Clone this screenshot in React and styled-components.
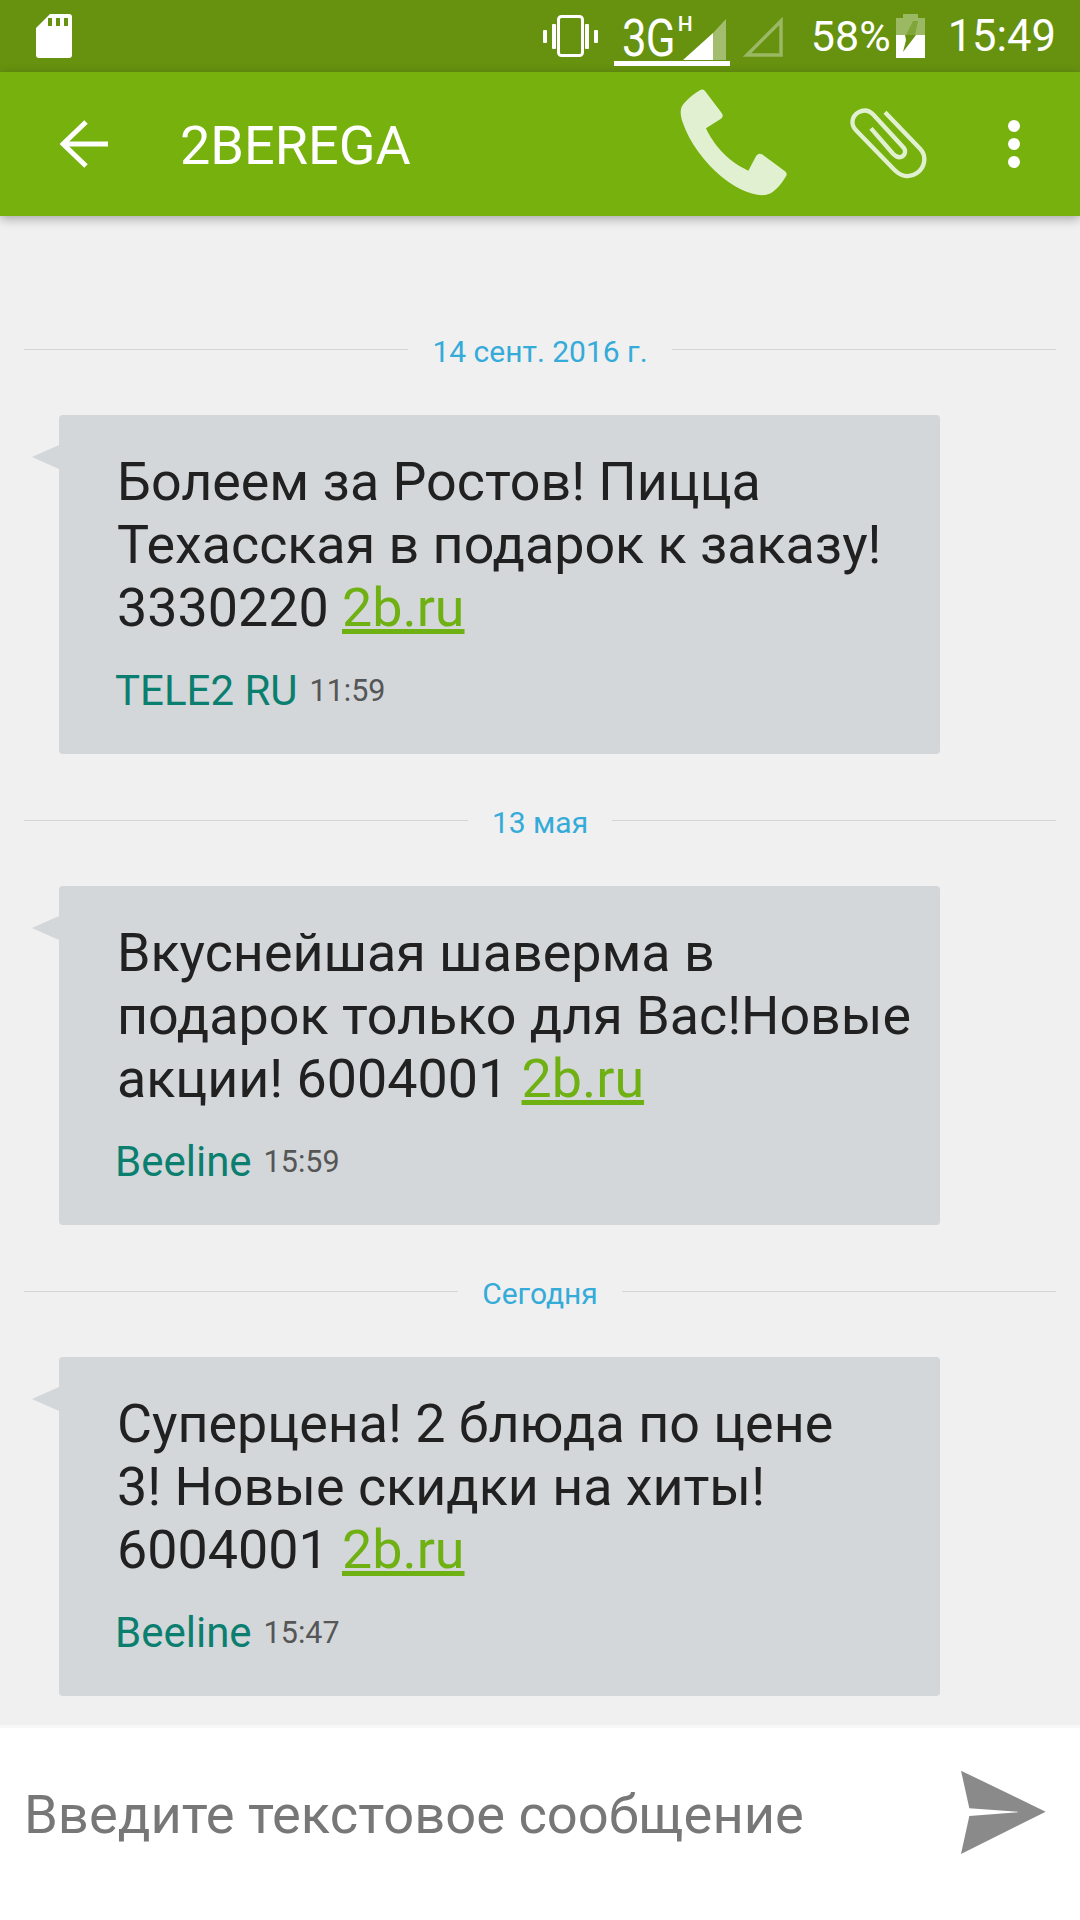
import styled, { createGlobalStyle } from "styled-components";

const messages = [
  {
    date: "14 сент. 2016 г.",
    text: "Болеем за Ростов! Пицца Техасская в подарок к заказу! 3330220",
    sender: "TELE2 RU",
    time: "11:59",
  },
  {
    date: "13 мая",
    text: "Вкуснейшая шаверма в подарок только для Вас!Новые акции! 6004001",
    sender: "Beeline",
    time: "15:59",
  },
  {
    date: "Сегодня",
    text: "Суперцена! 2 блюда по цене 3!\u00a0Новые скидки на хиты! 6004001",
    sender: "Beeline",
    time: "15:47",
  },
];

const App = () => {
  return (
    <Screen>
      <GlobalStyle />
      <StatusBar>
        <svg width="36" height="44" viewBox="0 0 36 44">
          <path
            fill="#fff"
            fillRule="evenodd"
            d="M14 0H33a3 3 0 0 1 3 3V41a3 3 0 0 1-3 3H3a3 3 0 0 1-3-3V14ZM12 4V12H16V4ZM20 4V12H24V4ZM28 4V12H32V4Z"
          />
        </svg>
        <StatusRight>
          <svg width="55" height="42" viewBox="0 0 55 42">
            <g fill="#fff">
              <rect x="0" y="15" width="4" height="13" rx="1" />
              <rect x="9" y="9" width="4" height="25" rx="1" />
              <rect x="42" y="9" width="4" height="25" rx="1" />
              <rect x="51" y="15" width="4" height="13" rx="1" />
            </g>
            <rect x="15.500" y="1.500" width="24" height="39" rx="3" fill="none" stroke="#fff" strokeWidth="3" />
          </svg>
          <Network>
            <NetworkType>3G</NetworkType>
            <NetworkSpeed>H</NetworkSpeed>
            <SignalIcon viewBox="0 0 43 41">
              <path fill="#fff" d="M0 41L30 14V41Z" />
              <path fill="#fff" opacity="0.4" d="M30 14L43 0V41H30Z" />
            </SignalIcon>
          </Network>
          <EmptySignal viewBox="0 0 41 41">
            <path fill="none" stroke="#fff" strokeWidth="3.500" opacity="0.35" d="M5 39L39 5V39Z" />
          </EmptySignal>
          <Battery>58%</Battery>
          <svg width="29" height="44" viewBox="0 0 29 44">
            <path fill="#fff" opacity="0.35" d="M7 0H22V4H29V21H0V4H7Z" />
            <path fill="#fff" d="M0 21H29V44H0Z" />
            <path fill="#66920f" d="M9 21H20L7 38L10 26Z" />
            <path fill="#66920f" opacity="0.5" d="M17 7H22L19 21H10Z" />
          </svg>
          <Clock>15:49</Clock>
        </StatusRight>
      </StatusBar>

      <AppBar>
        <svg width="48" height="48" viewBox="0 0 48 48">
          <path fill="none" stroke="#fff" strokeWidth="5" d="M48 24H3M26 2L3 24L26 46" />
        </svg>
        <Title>2BEREGA</Title>
        <PhoneIcon viewBox="0 0 390 390">
          <path
            fill="#e2f0d2"
            d="M88 33C93 30 98 31 102 36L152 102C157 109 156 115 150 119L105 148C124 190 165 245 232 275L255 232C259 224 266 222 273 226L340 275C347 280 349 286 345 292C325 325 305 345 283 348C240 352 190 325 150 292C100 250 55 190 35 130C25 100 28 85 40 72C55 55 72 42 88 33Z"
          />
        </PhoneIcon>
        <ClipIcon viewBox="0 0 300 270">
          <path
            fill="none"
            stroke="#e2f0d2"
            strokeWidth="13"
            d="M132 40L238 150C258 172 252 205 228 222C205 238 180 232 160 212L45 94C28 76 32 52 52 40C70 30 85 34 98 48L188 146C196 156 192 170 180 174C172 177 164 172 156 164L90 88"
          />
        </ClipIcon>
        <Dots>
          <Dot />
          <Dot />
          <Dot />
        </Dots>
      </AppBar>

      <Conversation>
        {messages.map((message) => (
          <Thread key={message.date}>
            <DateRow>
              <DateLine />
              <DateLabel>{message.date}</DateLabel>
              <DateLine />
            </DateRow>
            <Bubble>
              <MessageText>
                {message.text} <a href="#site">2b.ru</a>
              </MessageText>
              <Meta>
                <Sender>{message.sender}</Sender>
                <Time>{message.time}</Time>
              </Meta>
            </Bubble>
          </Thread>
        ))}
      </Conversation>

      <Composer>
        <Placeholder>Введите текстовое сообщение</Placeholder>
        <SendIcon viewBox="0 0 315 315">
          <path fill="#8a8a8a" d="M33 32L287 155L33 282L58 168L210 156L58 145Z" />
        </SendIcon>
      </Composer>
    </Screen>
  );
};

const GlobalStyle = createGlobalStyle`
  html, body {
    margin: 0;
    padding: 0;
    background: #f0f0f0;
  }
`;

const Screen = styled.div`
  width: 1080px;
  height: 1920px;
  overflow: hidden;
  display: flex;
  flex-direction: column;
  background: #f0f0f0;
  font-family: Roboto, "Noto Sans", sans-serif;
`;

const StatusBar = styled.div`
  height: 72px;
  flex: none;
  display: flex;
  align-items: center;
  justify-content: space-between;
  padding: 0 24px 0 36px;
  background: #66920f;
  box-sizing: border-box;
  color: #fff;
`;

const StatusRight = styled.div`
  display: flex;
  align-items: center;
`;

const Network = styled.div`
  display: flex;
  align-items: flex-end;
  height: 48px;
  width: 116px;
  margin: 6px 0 0 16px;
  border-bottom: 5px solid #fff;
`;

const NetworkType = styled.span`
  flex: none;
  width: 53px;
  margin-left: 8px;
  font-size: 52px;
  line-height: 44px;
  letter-spacing: -1px;
  transform: scaleX(0.84);
  transform-origin: left bottom;
`;

const NetworkSpeed = styled.span`
  flex: none;
  align-self: flex-start;
  width: 14px;
  margin: 2px 0 0 3px;
  font-size: 21px;
  font-weight: 500;
  line-height: 18px;
`;

const SignalIcon = styled.svg`
  flex: none;
  width: 43px;
  height: 41px;
  margin: 0 0 1px -9px;
`;

const EmptySignal = styled.svg`
  width: 41px;
  height: 41px;
  margin-left: 12px;
`;

const Battery = styled.span`
  font-size: 43px;
  margin: 0 5px 0 28px;
`;

const Clock = styled.span`
  font-size: 43.5px;
  margin-left: 23px;
`;

const AppBar = styled.header`
  position: relative;
  z-index: 1;
  height: 144px;
  flex: none;
  display: flex;
  align-items: center;
  padding-left: 60px;
  box-sizing: border-box;
  background: #76b10d;
  box-shadow: 0 3px 10px rgba(0, 0, 0, 0.3);
`;

const Title = styled.div`
  margin: 2px 0 0 72px;
  color: #fff;
  font-size: 54px;
  flex: 1;
`;

const PhoneIcon = styled.svg`
  width: 130px;
  height: 130px;
  margin-right: 40px;
`;

const ClipIcon = styled.svg`
  width: 100px;
  height: 90px;
  margin-right: 67px;
`;

const Dots = styled.div`
  display: flex;
  flex-direction: column;
  gap: 6px;
  margin-right: 60px;
`;

const Dot = styled.span`
  width: 12px;
  height: 12px;
  border-radius: 50%;
  background: #fff;
`;

const Conversation = styled.main`
  flex: 1;
  display: flex;
  flex-direction: column;
  gap: 49px;
  padding-top: 116px;
`;

const Thread = styled.section`
  display: flex;
  flex-direction: column;
  gap: 45px;
`;

const DateRow = styled.div`
  height: 38px;
  display: flex;
  align-items: center;
  padding: 0 24px;
  gap: 24px;
`;

const DateLine = styled.div`
  flex: 1;
  height: 1px;
  margin-top: -3px;
  background: #d3d6d9;
`;

const DateLabel = styled.span`
  color: #35abd9;
  font-size: 30px;
`;

const Bubble = styled.article`
  position: relative;
  width: 881px;
  height: 339px;
  margin-left: 59px;
  padding: 35px 20px 0 58px;
  box-sizing: border-box;
  border-radius: 4px;
  background: #d3d7da;

  &::before {
    content: "";
    position: absolute;
    left: -27px;
    top: 30px;
    border-style: solid;
    border-width: 12px 27px 12px 0;
    border-color: transparent #d3d7da transparent transparent;
  }
`;

const MessageText = styled.p`
  margin: 0;
  color: #212121;
  font-size: 53.8px;
  line-height: 63px;

  a {
    color: #6fb012;
  }
`;

const Meta = styled.div`
  display: flex;
  align-items: center;
  gap: 12px;
  margin: 27px 0 0 -2px;
`;

const Sender = styled.span`
  color: #0b7f6f;
  font-size: 42px;
`;

const Time = styled.span`
  color: #565656;
  font-size: 30.5px;
`;

const Composer = styled.footer`
  height: 195px;
  flex: none;
  display: flex;
  align-items: center;
  justify-content: space-between;
  padding: 0 25px 20px 24px;
  box-sizing: border-box;
  background: #fff;
  border-top: 3px solid #f7f7f7;
`;

const Placeholder = styled.div`
  color: #777;
  font-size: 54.3px;
`;

const SendIcon = styled.svg`
  width: 105px;
  height: 105px;
  margin-top: -3px;
`;

export default App;
